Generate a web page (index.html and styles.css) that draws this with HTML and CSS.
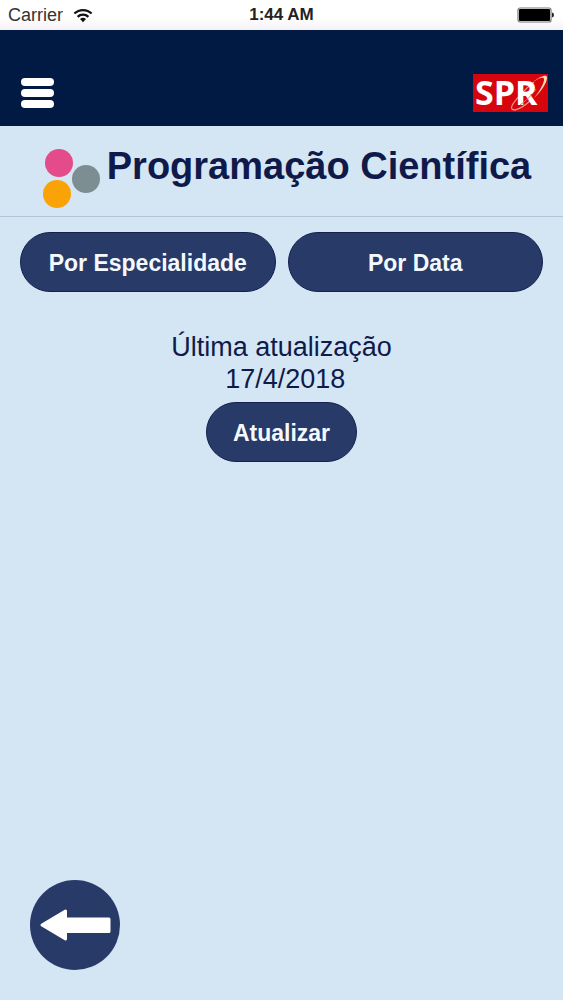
FILE: index.html
```
<!DOCTYPE html>
<html lang="pt">
<head>
<meta charset="utf-8">
<meta name="viewport" content="width=device-width, initial-scale=1">
<title>Programação Científica</title>
<link rel="stylesheet" href="styles.css">
</head>
<body>
<div class="status">
  <div class="carrier">
    <span>Carrier</span>
    <svg width="20" height="15" viewBox="0 0 20 15" aria-hidden="true">
      <g fill="none" stroke="#111" stroke-width="2.3">
        <path d="M1.4 5.5a12.4 12.4 0 0 1 17.2 0"/>
        <path d="M4.6 8.8a7.8 7.8 0 0 1 10.8 0"/>
      </g>
      <path d="M10 14.2l-3-3.1a4.3 4.3 0 0 1 6 0z" fill="#111"/>
    </svg>
  </div>
  <span class="time">1:44 AM</span>
  <svg class="battery" width="38" height="16" viewBox="0 0 38 16" aria-hidden="true">
    <rect x="1" y="1" width="33" height="14" rx="2" fill="#fff" stroke="#777" stroke-width="1.2"/>
    <rect x="2" y="2" width="31" height="12" rx="1" fill="#000"/>
    <path d="M35 5.5q2 .4 2 2.5t-2 2.5z" fill="#222"/>
  </svg>
</div>
<header class="navbar">
  <button class="menu" type="button" aria-label="Menu"><span></span><span></span><span></span></button>
  <svg class="logo" width="75" height="38" viewBox="0 0 75 38" role="img" aria-label="SPR">
    <rect width="75" height="38" fill="#d6040d"/>
    <path d="M61 8C52 15 39 29 38.500 33.500C38.500 38 47 36 57 27" fill="none" stroke="#ee9a82" stroke-width="1.200"/>
    <text class="logo-text" x="2" y="31">SPR</text>
    <path d="M47 31C54 26 60 20 63 15" fill="none" stroke="#e8705c" stroke-width="1"/>
    <path d="M60 8C68 1.500 74 0 74 3.500C74 9 68 18 61 24C67 17 71.500 8 71 5C70.500 2.500 66 4 60 8z" fill="#fbd9b4"/>
  </svg>
</header>
<div class="heading">
  <svg class="dots" width="60" height="62" viewBox="0 0 60 62" aria-hidden="true">
    <circle cx="17" cy="15" r="14" fill="#e34b8b"/>
    <circle cx="44" cy="31" r="14" fill="#7d8e93"/>
    <circle cx="15" cy="46" r="14" fill="#faa307"/>
  </svg>
  <h1>Programação Científica</h1>
</div>
<main class="content">
  <div class="filters">
    <button class="pill" type="button">Por Especialidade</button>
    <button class="pill" type="button">Por Data</button>
  </div>
  <div class="update">
    <p>Última atualização<br>&nbsp;17/4/2018</p>
    <button class="pill refresh" type="button">Atualizar</button>
  </div>
</main>
<footer class="footer">
  <button class="back" type="button" aria-label="Voltar">
    <svg width="90" height="90" viewBox="0 0 90 90" aria-hidden="true">
      <path d="M12 45L35.500 31V39H79V51.500H35.500V59z" fill="#fff" stroke="#fff" stroke-width="3" stroke-linejoin="round"/>
    </svg>
  </button>
</footer>
</body>
</html>
```
FILE: styles.css
```
* {
  box-sizing: border-box;
}

body {
  margin: 0;
  min-height: 100vh;
  display: flex;
  flex-direction: column;
  background: #d4e6f3;
  color: #101a4a;
  font-family: "Liberation Sans", Arial, sans-serif;
}

button {
  margin: 0;
  padding: 0;
  border: 0;
  font-family: inherit;
  cursor: pointer;
}

.status {
  display: grid;
  grid-template-columns: 1fr auto 1fr;
  align-items: center;
  height: 30px;
  padding: 0 8px;
  background: linear-gradient(#fff 60%, #f5f1f5);
  color: #333;
  font-size: 18px;
}

.carrier {
  display: flex;
  align-items: center;
  gap: 10px;
}

.time {
  color: #222;
  font-size: 17px;
  font-weight: bold;
}

.battery {
  justify-self: end;
}

.navbar {
  display: flex;
  align-items: flex-end;
  justify-content: space-between;
  height: 96px;
  padding: 0 15px 14px 21px;
  background: #001a43;
}

.menu {
  display: grid;
  gap: 3px;
  margin-bottom: 4px;
  background: none;
}

.menu span {
  width: 33px;
  height: 8px;
  border-radius: 4px;
  background: #fff;
}

.logo {
  overflow: visible;
}

.logo-text {
  fill: #fff;
  font-family: "Open Sans", "Noto Sans", sans-serif;
  font-size: 34px;
  font-weight: bold;
}

.heading {
  display: flex;
  align-items: flex-start;
  justify-content: center;
  gap: 5px;
  height: 91px;
  padding: 18px 0 0 10px;
  border-bottom: 1px solid #b3c6d5;
}

.dots {
  flex: none;
  margin-top: 4px;
}

h1 {
  margin: 0;
  font-size: 38px;
  line-height: 44px;
}

.content {
  flex: 1;
  padding: 15px 20px;
}

.filters {
  display: grid;
  grid-template-columns: 1fr 1fr;
  gap: 12px;
}

.pill {
  height: 60px;
  border: 1px solid #15204f;
  border-radius: 30px;
  padding-top: 3px;
  background: #283a67;
  color: #f4f9ff;
  font-size: 23px;
  font-weight: bold;
}

.update {
  display: flex;
  flex-direction: column;
  align-items: center;
  margin-top: 39px;
}

.update p {
  margin: 0 0 7px;
  font-size: 27px;
  line-height: 32px;
  text-align: center;
}

.refresh {
  width: 151px;
}

.footer {
  padding: 0 30px 30px;
}

.back {
  display: block;
  width: 90px;
  height: 90px;
  border-radius: 50%;
  background: #283a67;
}
```
